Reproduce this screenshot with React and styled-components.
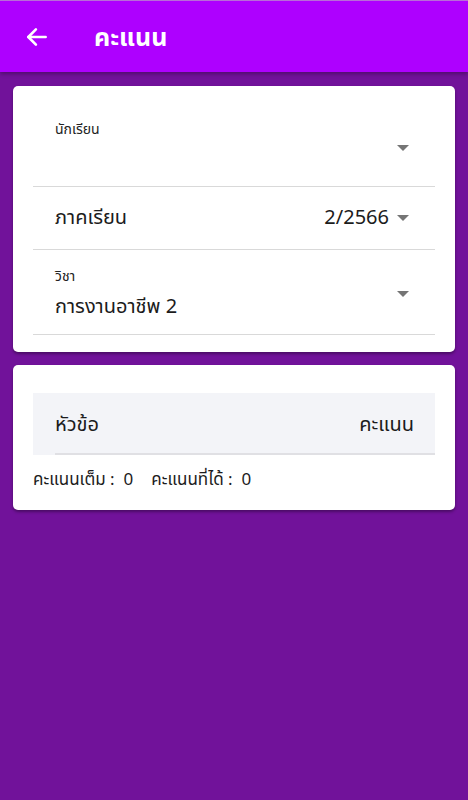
import React from "react";
import styled, { createGlobalStyle } from "styled-components";

const Global = createGlobalStyle`
  html, body {
    margin: 0;
    padding: 0;
    background: #71129a;
  }
  body {
    font-family: "Noto Sans Thai", "Noto Sans", "DejaVu Sans", sans-serif;
    color: #1c1c1c;
  }
`;

const Page = styled.div`
  width: 468px;
  min-height: 800px;
  background: #71129a;
`;

const Header = styled.header`
  height: 72px;
  background: #ae00ff;
  display: flex;
  align-items: center;
  padding-left: 24px;
  gap: 44px;
  box-shadow: 0 2px 4px rgba(0, 0, 0, 0.3);
  border-top: 1px solid #b86cd8;
  box-sizing: border-box;
`;

const Title = styled.h1`
  margin: 0 0 -2px;
  color: #fff;
  font-size: 25px;
  font-weight: 700;
`;

const Body = styled.main`
  padding: 14px 13px;
  display: flex;
  flex-direction: column;
  gap: 13px;
`;

const Card = styled.section`
  background: #fff;
  border-radius: 5px;
  box-shadow: 0 2px 3px rgba(0, 0, 0, 0.35);
  padding: ${(p) => p.$pad || "20px"};
`;

const Field = styled.div`
  display: flex;
  align-items: center;
  justify-content: space-between;
  height: ${(p) => p.$h}px;
  padding: 0 22px;
  border-bottom: 1px solid #d9d9d9;
  box-sizing: border-box;
`;

// label + value ซ้อนกัน
const Stack = styled.div`
  display: flex;
  flex-direction: column;
  gap: 6px;
  margin-top: ${(p) => p.$shift || 0}px;
`;

const Label = styled.span`
  font-size: 14px;
  line-height: 20px;
  color: #222;
`;

const Value = styled.span`
  font-size: 20px;
  line-height: 28px;
  color: #1c1c1c;
`;

const Right = styled.div`
  display: flex;
  align-items: center;
  gap: 8px;
  margin-right: 4px;
  margin-top: ${(p) => p.$shift || 0}px;
`;

const Caret = styled.span`
  width: 0;
  height: 0;
  border-left: 6px solid transparent;
  border-right: 6px solid transparent;
  border-top: 6px solid #757575;
`;

const TableHead = styled.div`
  margin-top: 8px;
  background: #f3f4f8;
  height: 62px;
  display: flex;
  align-items: center;
  justify-content: space-between;
  padding: 2px 21px 0 22px;
  box-sizing: border-box;
  position: relative;
  font-size: 20px;
  &::after {
    content: "";
    position: absolute;
    left: 22px;
    right: 0;
    bottom: 0;
    height: 2px;
    background: #e0e0e4;
  }
`;

const Summary = styled.div`
  margin-top: 12px;
  font-size: 17px;
  display: flex;
  gap: 18px;
`;

const Back = () => (
  <svg width="26" height="26" viewBox="0 0 24 24" fill="none" stroke="#fff" strokeWidth="2.4" strokeLinecap="round" strokeLinejoin="round">
    <path d="M20 12H4" />
    <path d="M11 5l-7 7 7 7" />
  </svg>
);

export default function App() {
  return (
    <Page>
      <Global />
      <Header>
        <Back />
        <Title>คะแนน</Title>
      </Header>
      <Body>
        <Card $pad="20px 20px 17px">
          <Field $h={81}>
            <Stack $shift={1}>
              <Label>นักเรียน</Label>
              <Value>&nbsp;</Value>
            </Stack>
            <Right $shift={4}><Caret /></Right>
          </Field>
          <Field $h={63}>
            <Value>ภาคเรียน</Value>
            <Right>
              <Value>2/2566</Value>
              <Caret />
            </Right>
          </Field>
          <Field $h={85}>
            <Stack $shift={3}>
              <Label>วิชา</Label>
              <Value>การงานอาชีพ 2</Value>
            </Stack>
            <Right $shift={4}><Caret /></Right>
          </Field>
        </Card>
        <Card $pad="20px 20px 17px">
          <TableHead>
            <span>หัวข้อ</span>
            <span>คะแนน</span>
          </TableHead>
          <Summary>
            <span>คะแนนเต็ม :&nbsp; 0</span>
            <span>คะแนนที่ได้ :&nbsp; 0</span>
          </Summary>
        </Card>
      </Body>
    </Page>
  );
}
